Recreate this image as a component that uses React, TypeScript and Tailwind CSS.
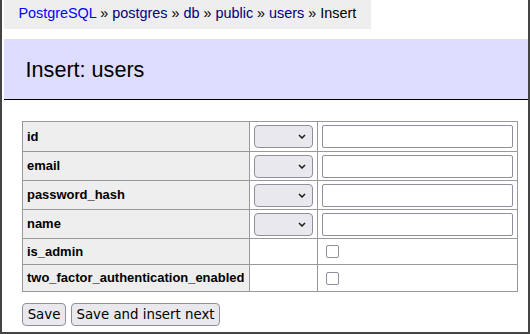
import React from 'react';

const fields = [
  { name: 'id', kind: 'text', h: 'h-[30px]' },
  { name: 'email', kind: 'text', h: 'h-[29px]' },
  { name: 'password_hash', kind: 'text', h: 'h-[29px]' },
  { name: 'name', kind: 'text', h: 'h-[29px]' },
  { name: 'is_admin', kind: 'bool', h: 'h-[26px]' },
  { name: 'two_factor_authentication_enabled', kind: 'bool', h: 'h-[27px]' },
];

const FakeSelect = () => (
  <div className="w-[59px] h-[23px] rounded-[4px] border border-[#8f8f9d] bg-[#e9e9ed] flex items-center justify-end pr-[6px]">
    <svg width="8" height="5" viewBox="0 0 8 5">
      <path d="M1 1 L4 4 L7 1" fill="none" stroke="#1b1b1b" strokeWidth="1.5" />
    </svg>
  </div>
);

const App = () => {
  return (
    <div className="w-[530px] h-[334px] border-x-2 border-b-2 border-[#444] bg-white overflow-hidden font-['Liberation_Sans',Arial,sans-serif] text-black">
      <div className="ml-[2px] h-[29px] w-[367px] bg-[#eee] px-[14.4px] text-[14.4px] leading-[26px] whitespace-nowrap">
        <a className="text-[#0000ff]">PostgreSQL</a> » <a className="text-[#000080]">postgres</a> »{' '}
        <a className="text-[#000080]">db</a> » <a className="text-[#000080]">public</a> »{' '}
        <a className="text-[#000080]">users</a> » Insert
      </div>

      <h2 className="mt-[10px] ml-[2px] h-[61px] bg-[#ddf] border-b border-black pl-[21.6px] pt-[17px] text-[21.6px] leading-[27px] font-normal">
        Insert: users
      </h2>

      <div className="ml-[20px] mt-[21px] w-[496px] grid grid-cols-[227px_68px_200px] border-t border-l border-[#999] text-[12.96px]">
        {fields.map((f) => (
          <React.Fragment key={f.name}>
            <div className={`${f.h} bg-[#eee] border-r border-b border-[#999] pl-[4px] flex items-center font-bold`}>
              {f.name}
            </div>
            <div className={`${f.h} border-r border-b border-[#999] pl-[4px] flex items-center`}>
              {f.kind === 'text' && <FakeSelect />}
            </div>
            <div className={`${f.h} border-r border-b border-[#999] pl-[4px] flex items-center`}>
              {f.kind === 'text' ? (
                <div className="w-[191px] h-[23px] rounded-[2px] border border-[#8f8f9d] bg-white" />
              ) : (
                <div className="ml-[4px] w-[13px] h-[13px] rounded-[2px] border border-[#8f8f9d] bg-white" />
              )}
            </div>
          </React.Fragment>
        ))}
      </div>

      <div className="ml-[20px] mt-[11px] flex gap-[5px] font-['DejaVu_Sans',sans-serif] text-[13.33px]">
        <button className="w-[44px] h-[23px] rounded-[4px] border border-[#8f8f9d] bg-[#e9e9ed] flex items-center justify-center">
          Save
        </button>
        <button className="w-[149px] h-[23px] rounded-[4px] border border-[#8f8f9d] bg-[#e9e9ed] flex items-center justify-center">
          Save and insert next
        </button>
      </div>
    </div>
  );
};

export default App;
